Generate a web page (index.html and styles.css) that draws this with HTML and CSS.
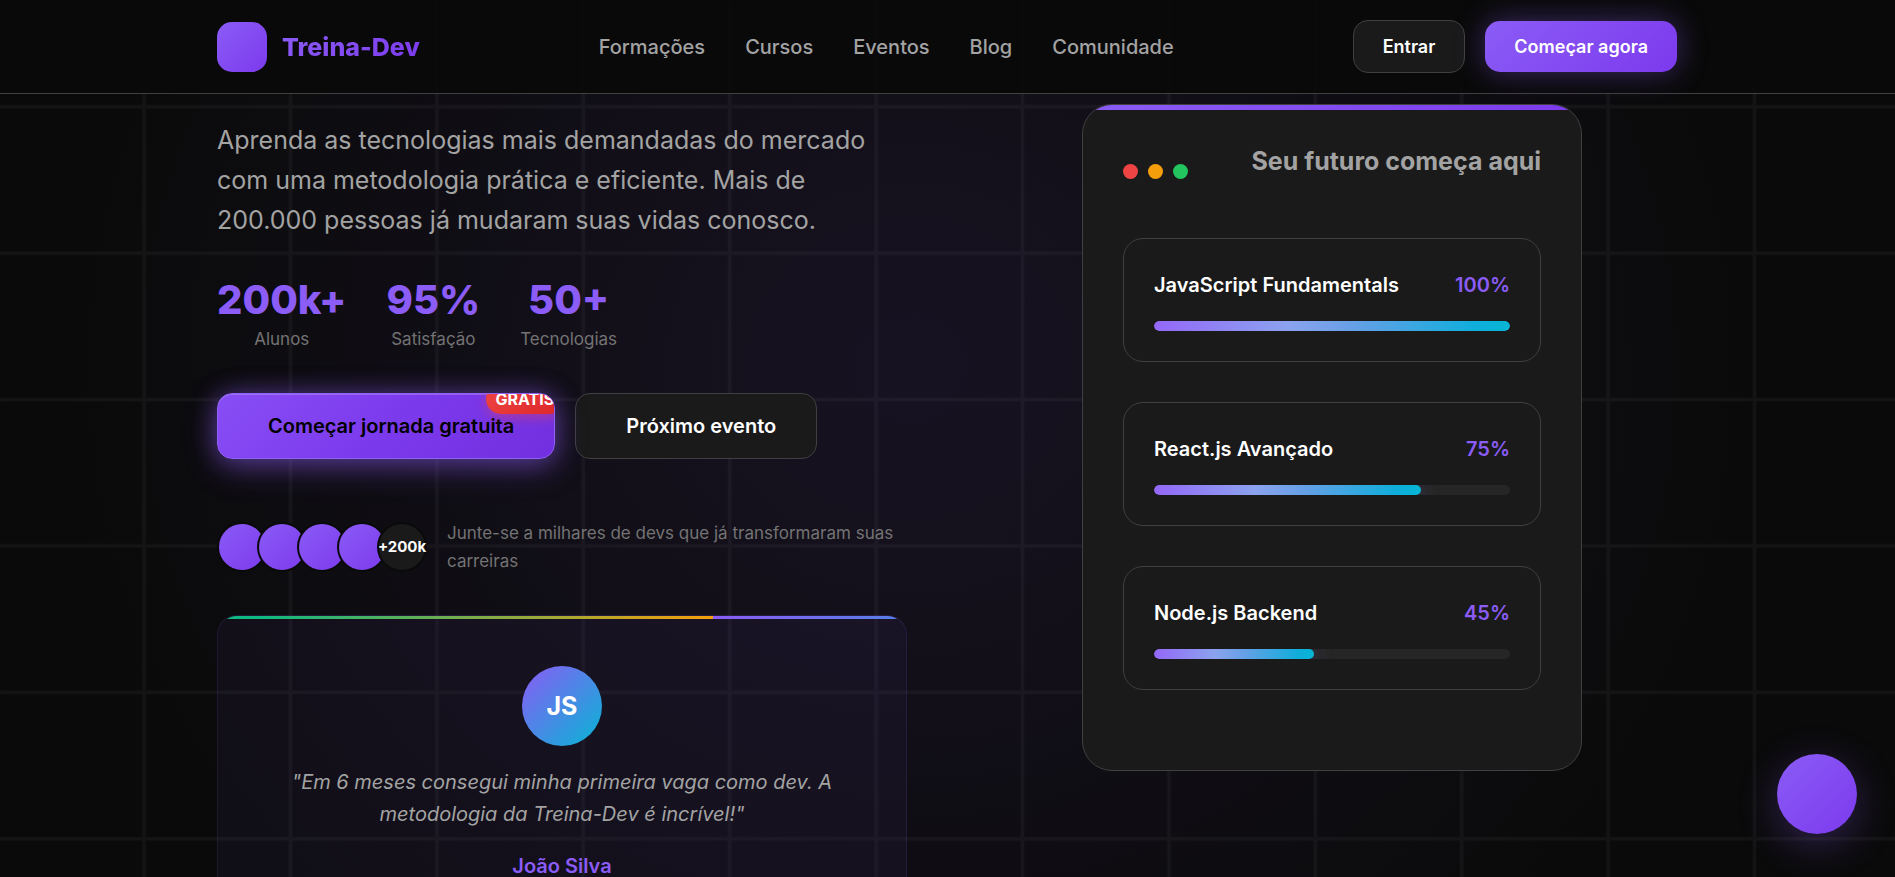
FILE: index.html
```html
<!DOCTYPE html>
<html lang="pt-BR">
<head>
<meta charset="utf-8">
<title>Treina-Dev</title>
<link rel="stylesheet" href="styles.css">
</head>
<body>
<div class="page">
  <svg class="grid-lines" viewBox="0 0 1295 599" preserveAspectRatio="xMinYMin slice" aria-hidden="true">
    <defs>
      <pattern id="grid" x="48.4" y="22.9" width="100" height="100" patternUnits="userSpaceOnUse">
        <path d="M50 0V100M0 50H100" fill="none" stroke="#fff" stroke-opacity=".04" stroke-width="2.4"/>
      </pattern>
    </defs>
    <rect width="1295" height="700" fill="url(#grid)"/>
  </svg>

  <header class="header">
    <div class="container header-row">
      <a class="logo" href="#"><span class="logo-mark"></span><span class="logo-name">Treina-Dev</span></a>
      <nav class="nav">
        <a href="#">Formações</a>
        <a href="#">Cursos</a>
        <a href="#">Eventos</a>
        <a href="#">Blog</a>
        <a href="#">Comunidade</a>
      </nav>
      <div class="actions">
        <button class="btn btn-ghost" type="button">Entrar</button>
        <button class="btn btn-primary" type="button">Começar agora</button>
      </div>
    </div>
  </header>

  <main class="container hero">
    <section class="intro">
      <p class="lead">Aprenda as tecnologias mais demandadas do mercado com uma metodologia prática e eficiente. Mais de 200.000 pessoas já mudaram suas vidas conosco.</p>
      <div class="stats">
        <div class="stat"><strong>200k+</strong><span>Alunos</span></div>
        <div class="stat"><strong>95%</strong><span>Satisfação</span></div>
        <div class="stat"><strong>50+</strong><span>Tecnologias</span></div>
      </div>
      <div class="cta-row">
        <button class="cta cta-main" type="button">Começar jornada gratuita<span class="badge">GRÁTIS</span></button>
        <button class="cta cta-alt" type="button">Próximo evento</button>
      </div>
      <div class="proof">
        <div class="avatars">
          <span class="avatar"></span><span class="avatar"></span><span class="avatar"></span><span class="avatar"></span><span class="avatar avatar-more">+200k</span>
        </div>
        <p class="proof-text">Junte-se a milhares de devs que já transformaram suas carreiras</p>
      </div>
      <article class="quote-card">
        <div class="quote-avatar">JS</div>
        <p class="quote">"Em 6 meses consegui minha primeira vaga como dev. A metodologia da Treina-Dev é incrível!"</p>
        <strong class="author">João Silva</strong>
      </article>
    </section>

    <section class="panel">
      <div class="panel-head">
        <div class="dots"><span class="dot red"></span><span class="dot amber"></span><span class="dot green"></span></div>
        <h2 class="panel-title">Seu futuro começa aqui</h2>
      </div>
      <div class="courses">
        <div class="course">
          <div class="course-row"><span>JavaScript Fundamentals</span><span class="percent">100%</span></div>
          <div class="track"><div class="fill" style="width:100%"></div></div>
        </div>
        <div class="course">
          <div class="course-row"><span>React.js Avançado</span><span class="percent">75%</span></div>
          <div class="track"><div class="fill" style="width:75%"></div></div>
        </div>
        <div class="course">
          <div class="course-row"><span>Node.js Backend</span><span class="percent">45%</span></div>
          <div class="track"><div class="fill" style="width:45%"></div></div>
        </div>
      </div>
    </section>
  </main>

  <button class="fab" type="button" aria-label="Abrir chat"></button>
</div>
</body>
</html>
```
FILE: styles.css
```css
:root {
  --bg: #0a0a0a;
  --surface: #1a1a1a;
  --line: #404040;
  --muted: #a3a3a3;
  --dim: #737373;
  --violet: #8b5cf6;
  --violet-grad: linear-gradient(135deg, #8b5cf6 0%, #7c3aed 100%);
}

* { box-sizing: border-box; margin: 0; }

body {
  font-family: Inter, "Liberation Sans", sans-serif;
  font-size: 20px;
  line-height: 32px;
  color: #fff;
  background: var(--bg);
}

a { color: inherit; text-decoration: none; }
button { font: inherit; cursor: pointer; }

.page {
  position: relative;
  height: 100vh;
  overflow: hidden;
  background: radial-gradient(ellipse 45% 90% at 48% 42%, rgba(139, 92, 246, 0.1), transparent);
}

.grid-lines {
  position: absolute;
  inset: 0;
  width: 100%;
  height: 100%;
}

.container {
  max-width: 1501px;
  margin: 0 auto;
  padding: 0 21px 0 20px;
}

.header {
  position: relative;
  z-index: 2;
  background: rgba(10, 10, 10, 0.95);
  border-bottom: 1px solid var(--line);
}

.header-row {
  display: flex;
  align-items: center;
  justify-content: space-between;
  padding-top: 20px;
  padding-bottom: 20px;
}

.logo { display: flex; align-items: center; gap: 15px; }

.logo-mark {
  width: 50px;
  height: 50px;
  border-radius: 15px;
  background: var(--violet-grad);
}

.logo-name {
  font-size: 25px;
  font-weight: 800;
  background: var(--violet-grad);
  background-clip: text;
  -webkit-background-clip: text;
  color: transparent;
}

.nav {
  display: flex;
  gap: 40px;
  font-weight: 500;
  color: var(--muted);
}

.actions { display: flex; align-items: center; gap: 20px; }

.btn {
  padding: 11px 29px;
  font-size: 18px;
  font-weight: 600;
  line-height: 29px;
  color: #fff;
  border: 0;
  border-radius: 15px;
}

.btn-ghost { background: var(--surface); border: 1px solid var(--line); }

.btn-primary {
  background: var(--violet-grad);
  box-shadow: 0 0 30px rgba(139, 92, 246, 0.4);
}

.hero {
  position: relative;
  display: grid;
  grid-template-columns: 1fr 1fr;
  gap: 80px;
  align-items: start;
  padding-top: 10px;
}

.intro { padding-top: 16px; }

.lead {
  font-size: 25px;
  line-height: 40px;
  color: var(--muted);
}

.stats { display: flex; gap: 40px; margin-top: 40px; }

.stat {
  display: flex;
  flex-direction: column;
  align-items: center;
  gap: 5px;
}

.stat strong {
  font-size: 40px;
  font-weight: 800;
  line-height: 40px;
  color: var(--violet);
}

.stat span { font-size: 17px; line-height: 28px; color: var(--dim); }

.cta-row { display: flex; gap: 20px; margin-top: 40px; }

.cta {
  padding: 16px 40px 16px 50px;
  font-weight: 600;
  line-height: 32px;
  border: 1px solid var(--line);
  border-radius: 15px;
}

.cta-main {
  position: relative;
  overflow: hidden;
  color: #000;
  background: linear-gradient(135deg, #884ef5 0%, #7c3aed 50%, #722fdf 100%);
  border-color: #9061f5;
  box-shadow: 0 8px 32px rgba(139, 92, 246, 0.4), 0 0 24px rgba(139, 92, 246, 0.35), inset 0 1px 0 rgba(255, 255, 255, 0.2);
}

.cta-alt { color: #fff; background: var(--surface); }

.badge {
  position: absolute;
  top: -10px;
  right: -10px;
  padding: 3px 10px;
  font-size: 16px;
  font-weight: 700;
  line-height: 24px;
  color: #fff;
  background: linear-gradient(135deg, #ef4444, #dc2626);
  border-radius: 15px;
  box-shadow: 0 4px 12px rgba(239, 68, 68, 0.4);
}

.proof { display: flex; align-items: center; gap: 20px; margin-top: 60px; }

.avatars { display: flex; }

.avatar {
  width: 50px;
  height: 50px;
  flex-shrink: 0;
  display: flex;
  align-items: center;
  justify-content: center;
  background: var(--violet-grad) border-box;
  border: 2px solid var(--bg);
  border-radius: 50%;
}

.avatar + .avatar { margin-left: -10px; }

.avatar-more { background: var(--surface); font-size: 15px; font-weight: 700; }

.proof-text { font-size: 17px; line-height: 28px; color: var(--dim); }

.quote-card {
  position: relative;
  display: flex;
  flex-direction: column;
  align-items: center;
  gap: 20px;
  margin-top: 40px;
  padding: 50px;
  overflow: hidden;
  text-align: center;
  background: rgba(139, 92, 246, 0.05);
  border: 1px solid rgba(139, 92, 246, 0.12);
  border-radius: 20px;
}

.quote-card::before {
  content: "";
  position: absolute;
  inset: 0 0 auto;
  height: 3px;
  background: linear-gradient(90deg, #10b981 6%, #f59e0b 72%, #8b5cf6 72%, #06b6d4 142%);
}

.quote-avatar {
  display: flex;
  align-items: center;
  justify-content: center;
  width: 80px;
  height: 80px;
  font-size: 25px;
  font-weight: 700;
  background: linear-gradient(135deg, #8b5cf6, #06b6d4);
  border-radius: 50%;
}

.quote { font-style: italic; color: var(--muted); }
.author { font-weight: 600; color: var(--violet); }

.panel {
  position: relative;
  justify-self: center;
  width: 100%;
  max-width: 500px;
  padding: 40px 40px 80px;
  overflow: hidden;
  background: var(--surface);
  border: 1px solid var(--line);
  border-radius: 30px;
}

.panel::before {
  content: "";
  position: absolute;
  inset: 0 0 auto;
  height: 5px;
  background: var(--violet-grad);
}

.panel-head {
  display: flex;
  align-items: center;
  justify-content: space-between;
  margin-bottom: 40px;
}

.dots { display: flex; gap: 10px; }
.dot { width: 15px; height: 15px; border-radius: 50%; }
.red { background: #ef4444; }
.amber { background: #f59e0b; }
.green { background: #22c55e; }

.panel-title {
  margin-bottom: 20px;
  font-size: 25px;
  font-weight: 700;
  line-height: 33px;
  color: var(--muted);
}

.courses { display: grid; gap: 40px; }

.course {
  padding: 30px;
  border: 1px solid var(--line);
  border-radius: 20px;
}

.course-row {
  display: flex;
  justify-content: space-between;
  margin-bottom: 20px;
  font-weight: 600;
}

.percent { color: var(--violet); }

.track {
  height: 10px;
  overflow: hidden;
  background: #262626;
  border-radius: 5px;
}

.fill {
  height: 100%;
  background: linear-gradient(90deg, #9468f8, #8ba3ee 38%, #64a0e6 57%, #10aedb 90%, #06b6d4);
  border-radius: 5px;
  box-shadow: 0 0 20px rgba(139, 92, 246, 0.4);
}

.fab {
  position: absolute;
  right: 38px;
  bottom: 43px;
  width: 80px;
  height: 80px;
  background: var(--violet-grad);
  border: 0;
  border-radius: 50%;
  box-shadow: 0 10px 40px rgba(139, 92, 246, 0.3);
}
```
